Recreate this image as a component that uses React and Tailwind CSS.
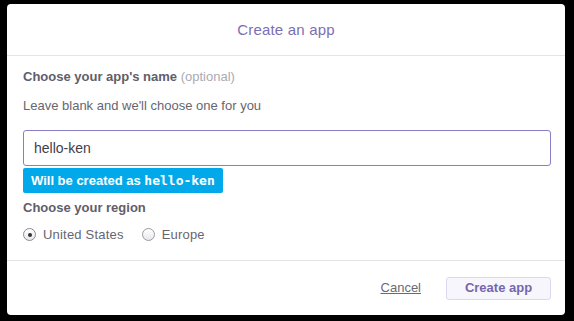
export default function App() {
  return (
    <div className="w-full h-[321px] bg-black pt-[4px] pl-[7px] font-['Liberation_Sans',Arial,sans-serif]">
      <div className="w-[558px] h-[311px] bg-white rounded-[4px] flex flex-col">
        {/* header */}
        <div className="h-[52px] flex items-center justify-center border-b border-[#e4e4e8]">
          <h1 className="text-[15px] tracking-[0.2px] text-[#7b6fb3] mt-[2px]">Create an app</h1>
        </div>

        {/* body */}
        <div className="flex-1 px-[16px] pt-[13px] border-b border-[#e4e4e8]">
          <p className="text-[13px] leading-[16px] text-[#5f5e6b]">
            <span className="font-bold">Choose your app's name</span>{' '}
            <span className="text-[#aaaab2]">(optional)</span>
          </p>
          <p className="mt-[13px] text-[13px] leading-[16px] text-[#666670]">
            Leave blank and we'll choose one for you
          </p>
          <div className="mt-[16px] h-[36px] w-[528px] border border-[#8a7fc4] rounded-[3px] flex items-center px-[10px]">
            <span className="text-[14px] text-[#3f3e4a]">hello-ken</span>
          </div>
          <div className="mt-[2px] inline-flex items-center h-[25px] px-[8px] bg-[#02a9ea] rounded-[2px] text-white text-[13px] font-bold">
            Will be created as&nbsp;
            <span className="font-['DejaVu_Sans_Mono',monospace] text-[13px]">hello-ken</span>
          </div>
          <p className="mt-[7px] text-[13px] leading-[16px] font-bold text-[#5f5e6b]">Choose your region</p>
          <div className="mt-[9px] flex items-center text-[13px] tracking-[0.2px] text-[#666670]">
            <label className="flex items-center">
              <span className="w-[13px] h-[13px] rounded-full border border-[#8a8a94] flex items-center justify-center bg-gradient-to-b from-white to-[#e8e8ec]">
                <span className="w-[4px] h-[4px] rounded-full bg-[#333]" />
              </span>
              <span className="ml-[7px]">United States</span>
            </label>
            <label className="flex items-center ml-[18px]">
              <span className="w-[13px] h-[13px] rounded-full border border-[#9a9aa4] bg-gradient-to-b from-white to-[#e8e8ec]" />
              <span className="ml-[7px]">Europe</span>
            </label>
          </div>
        </div>

        {/* footer */}
        <div className="h-[54px] flex items-center justify-end pr-[14px]">
          <a className="text-[13px] text-[#6a6a74] underline mr-[25px]">Cancel</a>
          <button className="h-[23px] w-[105px] border border-[#dcd8ef] rounded-[3px] bg-[#f7f6fc] text-[13px] font-bold text-[#7466b0]">
            Create app
          </button>
        </div>
      </div>
    </div>
  );
}
